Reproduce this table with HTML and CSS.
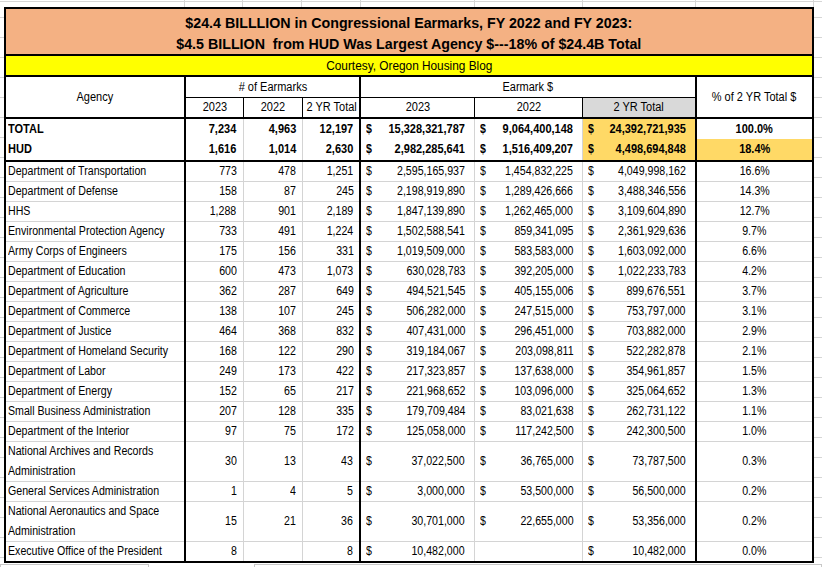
FILE: index.html
```html
<!DOCTYPE html>
<html>
<head>
<meta charset="utf-8">
<link rel="stylesheet" href="styles.css">
</head>
<body>
<div class="sheet">
<table class="grid">
  <colgroup>
    <col class="c-agency"><col class="c-n"><col class="c-n2"><col class="c-n"><col class="c-d1"><col class="c-d2"><col class="c-d3"><col class="c-pct">
  </colgroup>
  <tr class="r-title">
    <td colspan="8" class="title"><span class="t">$24.4 BILLLION in Congressional Earmarks, FY 2022 and FY 2023:<br>$4.5 BILLION&nbsp; from HUD Was Largest Agency $---18% of $24.4B Total</span></td>
  </tr>
  <tr class="r-credit">
    <td colspan="8" class="credit"><span class="t">Courtesy, Oregon Housing Blog</span></td>
  </tr>
  <tr class="r-h1">
    <td rowspan="2" class="hd thick-r span2"><span class="t">Agency</span></td>
    <td colspan="3" class="hd thick-r under"><span class="t">#&nbsp;of Earmarks</span></td>
    <td colspan="3" class="hd thick-r under"><span class="t">Earmark $</span></td>
    <td rowspan="2" class="hd span2"><span class="t">% of 2 YR Total $</span></td>
  </tr>
  <tr class="r-h2">
    <td class="hd sub"><span class="t">2023</span></td>
    <td class="hd sub"><span class="t">2022</span></td>
    <td class="hd sub thick-r"><span class="t">2 YR Total</span></td>
    <td class="hd sub"><span class="t">2023</span></td>
    <td class="hd sub"><span class="t">2022</span></td>
    <td class="hd sub thick-r shaded"><span class="t">2 YR Total</span></td>
  </tr>
  <tr class="r-total">
    <td class="ag thick-r"><span class="t">TOTAL</span></td>
    <td class="num"><span class="t">7,234</span></td><td class="num"><span class="t">4,963</span></td><td class="num thick-r"><span class="t">12,197</span></td>
    <td class="usd"><span class="cur">$</span><span class="t">15,328,321,787</span></td>
    <td class="usd"><span class="cur">$</span><span class="t">9,064,400,148</span></td>
    <td class="usd thick-r gold"><span class="cur">$</span><span class="t">24,392,721,935</span></td>
    <td class="pct"><span class="t">100.0%</span></td>
  </tr>
  <tr class="r-hud">
    <td class="ag thick-r"><span class="t">HUD</span></td>
    <td class="num"><span class="t">1,616</span></td><td class="num"><span class="t">1,014</span></td><td class="num thick-r"><span class="t">2,630</span></td>
    <td class="usd"><span class="cur">$</span><span class="t">2,982,285,641</span></td>
    <td class="usd"><span class="cur">$</span><span class="t">1,516,409,207</span></td>
    <td class="usd thick-r gold"><span class="cur">$</span><span class="t">4,498,694,848</span></td>
    <td class="pct gold"><span class="t">18.4%</span></td>
  </tr>
  <tr>
    <td class="ag thick-r"><span class="t">Department of Transportation</span></td>
    <td class="num"><span class="t">773</span></td><td class="num"><span class="t">478</span></td><td class="num thick-r"><span class="t">1,251</span></td>
    <td class="usd"><span class="cur">$</span><span class="t">2,595,165,937</span></td>
    <td class="usd"><span class="cur">$</span><span class="t">1,454,832,225</span></td>
    <td class="usd thick-r"><span class="cur">$</span><span class="t">4,049,998,162</span></td>
    <td class="pct"><span class="t">16.6%</span></td>
  </tr>
  <tr>
    <td class="ag thick-r"><span class="t">Department of Defense</span></td>
    <td class="num"><span class="t">158</span></td><td class="num"><span class="t">87</span></td><td class="num thick-r"><span class="t">245</span></td>
    <td class="usd"><span class="cur">$</span><span class="t">2,198,919,890</span></td>
    <td class="usd"><span class="cur">$</span><span class="t">1,289,426,666</span></td>
    <td class="usd thick-r"><span class="cur">$</span><span class="t">3,488,346,556</span></td>
    <td class="pct"><span class="t">14.3%</span></td>
  </tr>
  <tr>
    <td class="ag thick-r"><span class="t">HHS</span></td>
    <td class="num"><span class="t">1,288</span></td><td class="num"><span class="t">901</span></td><td class="num thick-r"><span class="t">2,189</span></td>
    <td class="usd"><span class="cur">$</span><span class="t">1,847,139,890</span></td>
    <td class="usd"><span class="cur">$</span><span class="t">1,262,465,000</span></td>
    <td class="usd thick-r"><span class="cur">$</span><span class="t">3,109,604,890</span></td>
    <td class="pct"><span class="t">12.7%</span></td>
  </tr>
  <tr>
    <td class="ag thick-r"><span class="t">Environmental Protection Agency</span></td>
    <td class="num"><span class="t">733</span></td><td class="num"><span class="t">491</span></td><td class="num thick-r"><span class="t">1,224</span></td>
    <td class="usd"><span class="cur">$</span><span class="t">1,502,588,541</span></td>
    <td class="usd"><span class="cur">$</span><span class="t">859,341,095</span></td>
    <td class="usd thick-r"><span class="cur">$</span><span class="t">2,361,929,636</span></td>
    <td class="pct"><span class="t">9.7%</span></td>
  </tr>
  <tr>
    <td class="ag thick-r"><span class="t">Army Corps of Engineers</span></td>
    <td class="num"><span class="t">175</span></td><td class="num"><span class="t">156</span></td><td class="num thick-r"><span class="t">331</span></td>
    <td class="usd"><span class="cur">$</span><span class="t">1,019,509,000</span></td>
    <td class="usd"><span class="cur">$</span><span class="t">583,583,000</span></td>
    <td class="usd thick-r"><span class="cur">$</span><span class="t">1,603,092,000</span></td>
    <td class="pct"><span class="t">6.6%</span></td>
  </tr>
  <tr>
    <td class="ag thick-r"><span class="t">Department of Education</span></td>
    <td class="num"><span class="t">600</span></td><td class="num"><span class="t">473</span></td><td class="num thick-r"><span class="t">1,073</span></td>
    <td class="usd"><span class="cur">$</span><span class="t">630,028,783</span></td>
    <td class="usd"><span class="cur">$</span><span class="t">392,205,000</span></td>
    <td class="usd thick-r"><span class="cur">$</span><span class="t">1,022,233,783</span></td>
    <td class="pct"><span class="t">4.2%</span></td>
  </tr>
  <tr>
    <td class="ag thick-r"><span class="t">Department of Agriculture</span></td>
    <td class="num"><span class="t">362</span></td><td class="num"><span class="t">287</span></td><td class="num thick-r"><span class="t">649</span></td>
    <td class="usd"><span class="cur">$</span><span class="t">494,521,545</span></td>
    <td class="usd"><span class="cur">$</span><span class="t">405,155,006</span></td>
    <td class="usd thick-r"><span class="cur">$</span><span class="t">899,676,551</span></td>
    <td class="pct"><span class="t">3.7%</span></td>
  </tr>
  <tr>
    <td class="ag thick-r"><span class="t">Department of Commerce</span></td>
    <td class="num"><span class="t">138</span></td><td class="num"><span class="t">107</span></td><td class="num thick-r"><span class="t">245</span></td>
    <td class="usd"><span class="cur">$</span><span class="t">506,282,000</span></td>
    <td class="usd"><span class="cur">$</span><span class="t">247,515,000</span></td>
    <td class="usd thick-r"><span class="cur">$</span><span class="t">753,797,000</span></td>
    <td class="pct"><span class="t">3.1%</span></td>
  </tr>
  <tr>
    <td class="ag thick-r"><span class="t">Department of Justice</span></td>
    <td class="num"><span class="t">464</span></td><td class="num"><span class="t">368</span></td><td class="num thick-r"><span class="t">832</span></td>
    <td class="usd"><span class="cur">$</span><span class="t">407,431,000</span></td>
    <td class="usd"><span class="cur">$</span><span class="t">296,451,000</span></td>
    <td class="usd thick-r"><span class="cur">$</span><span class="t">703,882,000</span></td>
    <td class="pct"><span class="t">2.9%</span></td>
  </tr>
  <tr>
    <td class="ag thick-r"><span class="t">Department of Homeland Security</span></td>
    <td class="num"><span class="t">168</span></td><td class="num"><span class="t">122</span></td><td class="num thick-r"><span class="t">290</span></td>
    <td class="usd"><span class="cur">$</span><span class="t">319,184,067</span></td>
    <td class="usd"><span class="cur">$</span><span class="t">203,098,811</span></td>
    <td class="usd thick-r"><span class="cur">$</span><span class="t">522,282,878</span></td>
    <td class="pct"><span class="t">2.1%</span></td>
  </tr>
  <tr>
    <td class="ag thick-r"><span class="t">Department of Labor</span></td>
    <td class="num"><span class="t">249</span></td><td class="num"><span class="t">173</span></td><td class="num thick-r"><span class="t">422</span></td>
    <td class="usd"><span class="cur">$</span><span class="t">217,323,857</span></td>
    <td class="usd"><span class="cur">$</span><span class="t">137,638,000</span></td>
    <td class="usd thick-r"><span class="cur">$</span><span class="t">354,961,857</span></td>
    <td class="pct"><span class="t">1.5%</span></td>
  </tr>
  <tr>
    <td class="ag thick-r"><span class="t">Department of Energy</span></td>
    <td class="num"><span class="t">152</span></td><td class="num"><span class="t">65</span></td><td class="num thick-r"><span class="t">217</span></td>
    <td class="usd"><span class="cur">$</span><span class="t">221,968,652</span></td>
    <td class="usd"><span class="cur">$</span><span class="t">103,096,000</span></td>
    <td class="usd thick-r"><span class="cur">$</span><span class="t">325,064,652</span></td>
    <td class="pct"><span class="t">1.3%</span></td>
  </tr>
  <tr>
    <td class="ag thick-r"><span class="t">Small Business Administration</span></td>
    <td class="num"><span class="t">207</span></td><td class="num"><span class="t">128</span></td><td class="num thick-r"><span class="t">335</span></td>
    <td class="usd"><span class="cur">$</span><span class="t">179,709,484</span></td>
    <td class="usd"><span class="cur">$</span><span class="t">83,021,638</span></td>
    <td class="usd thick-r"><span class="cur">$</span><span class="t">262,731,122</span></td>
    <td class="pct"><span class="t">1.1%</span></td>
  </tr>
  <tr>
    <td class="ag thick-r"><span class="t">Department of the Interior</span></td>
    <td class="num"><span class="t">97</span></td><td class="num"><span class="t">75</span></td><td class="num thick-r"><span class="t">172</span></td>
    <td class="usd"><span class="cur">$</span><span class="t">125,058,000</span></td>
    <td class="usd"><span class="cur">$</span><span class="t">117,242,500</span></td>
    <td class="usd thick-r"><span class="cur">$</span><span class="t">242,300,500</span></td>
    <td class="pct"><span class="t">1.0%</span></td>
  </tr>
  <tr class="r-two">
    <td class="ag thick-r"><span class="t">National Archives and Records<br>Administration</span></td>
    <td class="num"><span class="t">30</span></td><td class="num"><span class="t">13</span></td><td class="num thick-r"><span class="t">43</span></td>
    <td class="usd"><span class="cur">$</span><span class="t">37,022,500</span></td>
    <td class="usd"><span class="cur">$</span><span class="t">36,765,000</span></td>
    <td class="usd thick-r"><span class="cur">$</span><span class="t">73,787,500</span></td>
    <td class="pct"><span class="t">0.3%</span></td>
  </tr>
  <tr>
    <td class="ag thick-r"><span class="t">General Services Administration</span></td>
    <td class="num"><span class="t">1</span></td><td class="num"><span class="t">4</span></td><td class="num thick-r"><span class="t">5</span></td>
    <td class="usd"><span class="cur">$</span><span class="t">3,000,000</span></td>
    <td class="usd"><span class="cur">$</span><span class="t">53,500,000</span></td>
    <td class="usd thick-r"><span class="cur">$</span><span class="t">56,500,000</span></td>
    <td class="pct"><span class="t">0.2%</span></td>
  </tr>
  <tr class="r-two">
    <td class="ag thick-r"><span class="t">National Aeronautics and Space<br>Administration</span></td>
    <td class="num"><span class="t">15</span></td><td class="num"><span class="t">21</span></td><td class="num thick-r"><span class="t">36</span></td>
    <td class="usd"><span class="cur">$</span><span class="t">30,701,000</span></td>
    <td class="usd"><span class="cur">$</span><span class="t">22,655,000</span></td>
    <td class="usd thick-r"><span class="cur">$</span><span class="t">53,356,000</span></td>
    <td class="pct"><span class="t">0.2%</span></td>
  </tr>
  <tr>
    <td class="ag thick-r"><span class="t">Executive Office of the President</span></td>
    <td class="num"><span class="t">8</span></td><td class="num"></td><td class="num thick-r"><span class="t">8</span></td>
    <td class="usd"><span class="cur">$</span><span class="t">10,482,000</span></td>
    <td class="usd"></td>
    <td class="usd thick-r"><span class="cur">$</span><span class="t">10,482,000</span></td>
    <td class="pct"><span class="t">0.0%</span></td>
  </tr>
</table>
<div class="tabs"><div class="tab-a"></div><div class="tab-gap"></div><div class="tab-b"></div></div>
</div>
</body>
</html>
```
FILE: styles.css
```css
html, body {
  margin: 0;
  padding: 0;
  background: #fff;
}
body {
  width: 822px;
  height: 567px;
  overflow: hidden;
  font-family: "Liberation Sans", Arial, sans-serif;
  color: #000;
}
.sheet {
  padding: 7px 0 0 4px;
  height: 567px;
  box-sizing: border-box;
  background-image:
    linear-gradient(to right, transparent 184px, #d6d6d6 184px 185px, transparent 185px 242px, #d6d6d6 242px 243px, transparent 243px 301px, #d6d6d6 301px 302px, transparent 302px 360px, #d6d6d6 360px 361px, transparent 361px 474px, #d6d6d6 474px 475px, transparent 475px 582px, #d6d6d6 582px 583px, transparent 583px 695px, #d6d6d6 695px 696px, transparent 696px 813px, #d6d6d6 813px 814px, transparent 814px),
    linear-gradient(to bottom, transparent 1px, #d6d6d6 1px 2px, transparent 2px),
    repeating-linear-gradient(to bottom, transparent 0 17px, #d6d6d6 17px 18px, transparent 18px 20px);
  background-size: 100% 7px, 100% 7px, 100% 100%;
  background-repeat: no-repeat;
}
.grid {
  border-collapse: collapse;
  table-layout: fixed;
  width: 810px;
  border: 2px solid #000;
  background: #fff;
  font-size: 12.5px;
}
.c-agency { width: 180px; }
.c-n { width: 58px; }
.c-n2 { width: 59px; }
.c-d1 { width: 114px; }
.c-d2 { width: 108px; }
.c-d3 { width: 113px; }
.c-pct { width: 117px; }

.grid td {
  padding: 0;
  border: 1px solid #d4d4d4;
  line-height: 19px;
  height: 19px;
  white-space: nowrap;
  overflow: hidden;
  vertical-align: middle;
}
.t {
  display: inline-block;
  transform: scaleX(0.85);
  transform-origin: left center;
}

/* title band */
.title {
  background: #f4b183;
  font-weight: bold;
  font-size: 15px;
  line-height: 21px !important;
  height: 42px !important;
  padding-top: 3px !important;
  text-align: center;
  border-bottom: 2px solid #000 !important;
}
.title .t { transform: scaleX(0.95); transform-origin: center; }
.credit {
  background: #ffff00;
  text-align: center;
  font-size: 13px;
  border-bottom: 2px solid #000 !important;
}
.credit .t { transform: scaleX(0.91); transform-origin: center; }

/* column headers */
.hd {
  text-align: center;
  border: 1px solid #000 !important;
}
.hd .t { transform: scaleX(0.88); transform-origin: center; }
.r-h1 td { height: 20px !important; line-height: 20px !important; }
.span2 { border-bottom: 2px solid #000 !important; }
.under { border-bottom: 1px solid #000 !important; }
.sub { border-bottom: 2px solid #000 !important; }
.shaded { background: #d9d9d9; }
.thick-r { border-right: 2px solid #000 !important; }

/* body cells */
.ag {
  padding-left: 2px !important;
  text-align: left;
}
.num {
  text-align: right;
  padding-right: 6px !important;
}
.num .t { transform-origin: right center; }
.usd {
  text-align: right;
  padding-right: 9px !important;
}
.usd .t { transform-origin: right center; }
.usd .cur {
  float: left;
  padding-left: 6px;
  display: inline-block;
  transform: scaleX(0.85);
  transform-origin: left center;
}
.pct { text-align: center; }
.pct .t { transform-origin: center; }
.gold { background: #ffd966; }

.r-total td, .r-hud td { font-weight: bold; }
.r-total .t, .r-hud .t { transform: scaleX(0.88); }
.r-total td { height: 20px !important; border-bottom-style: hidden; }
.r-hud td { height: 21px !important; border-bottom: 2px solid #000 !important; }
.r-two td { height: 39px !important; line-height: 19.5px !important; }

.tabs {
  display: flex;
  margin: 1px 0 0 -4px;
  height: 6px;
}
.tab-a { width: 147px; border: 1px solid #c8c8c8; border-bottom: none; }
.tab-gap { width: 105px; }
.tab-b { flex: 1; border: 1px solid #c8c8c8; border-bottom: none; }
```
